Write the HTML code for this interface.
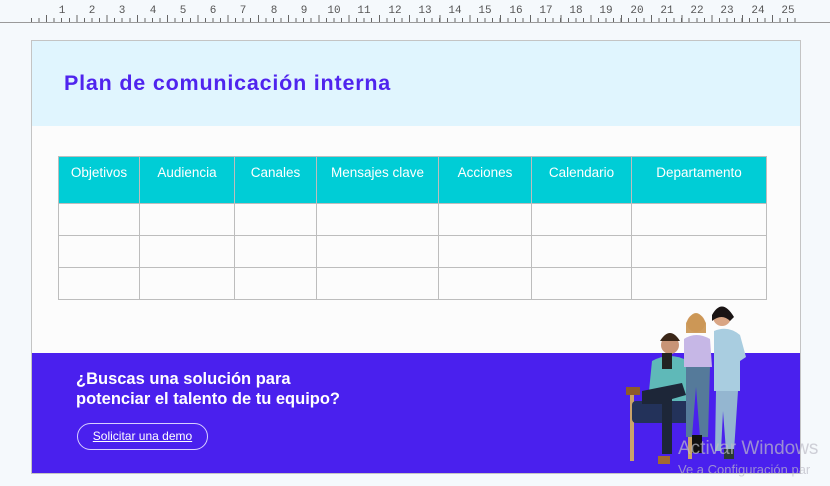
<!DOCTYPE html>
<html><head><meta charset="utf-8"><style>
*{margin:0;padding:0;box-sizing:border-box}
body{width:830px;height:486px;background:#f5f9fc;position:relative;overflow:hidden;font-family:"Liberation Sans",sans-serif}
.ruler{position:absolute;left:0;top:0;width:830px;height:23px}
.rl{position:absolute;left:0;top:22px;width:830px;height:1px;background:#9a9a9a}
.ticks{position:absolute;left:31px;top:18px;width:770px;height:4px;background:repeating-linear-gradient(90deg,#666 0 1px,transparent 1px 7.56px)}
.ticks2{position:absolute;left:31px;top:15px;width:770px;height:7px;background:repeating-linear-gradient(90deg,transparent 0 15.1px,#666 15.1px 16.1px,transparent 16.1px 30.25px)}
.num{position:absolute;top:5px;font-family:"Liberation Mono",monospace;font-size:11px;color:#555;transform:translateX(-50%)}
.card{position:absolute;left:31px;top:40px;width:770px;height:434px;background:#fcfcfc;border:1px solid #c4c4c4}
.head{position:absolute;left:0;top:0;width:768px;height:85px;background:#e0f5fe}
.title{position:absolute;left:32px;top:30px;font-size:21.5px;font-weight:bold;color:#4f24ee;letter-spacing:0.8px}
table{position:absolute;left:26px;top:115px;border-collapse:collapse;font-size:13.5px}
td,th{border:1px solid #bdbdbd}
th{background:#00cdd6;color:#fff;font-weight:normal;height:47px;vertical-align:top;padding-top:8px}
td{height:32px}
.band{position:absolute;left:0;top:312px;width:768px;height:120px;background:#4a20ee}
.q{position:absolute;left:44px;top:16px;color:#fff;font-size:16.5px;font-weight:bold;line-height:20px}
.btn{position:absolute;left:45px;top:70px;width:131px;height:27px;border:1px solid #d8d0ff;border-radius:14px;color:#fff;font-size:12px;text-decoration:underline;text-align:center;line-height:25px}
.wm1{position:absolute;left:678px;top:438px;color:rgba(190,190,200,.7);font-size:19px}
.wm2{position:absolute;left:678px;top:462px;color:rgba(190,190,200,.7);font-size:13px;white-space:nowrap}
</style></head><body>
<div class="ruler">
<div class="ticks"></div><div class="ticks2"></div><div class="rl"></div>
<span class="num" style="left:62px">1</span><span class="num" style="left:92px">2</span><span class="num" style="left:122px">3</span><span class="num" style="left:153px">4</span><span class="num" style="left:183px">5</span><span class="num" style="left:213px">6</span><span class="num" style="left:243px">7</span><span class="num" style="left:274px">8</span><span class="num" style="left:304px">9</span><span class="num" style="left:334px">10</span><span class="num" style="left:364px">11</span><span class="num" style="left:395px">12</span><span class="num" style="left:425px">13</span><span class="num" style="left:455px">14</span><span class="num" style="left:485px">15</span><span class="num" style="left:516px">16</span><span class="num" style="left:546px">17</span><span class="num" style="left:576px">18</span><span class="num" style="left:606px">19</span><span class="num" style="left:637px">20</span><span class="num" style="left:667px">21</span><span class="num" style="left:697px">22</span><span class="num" style="left:727px">23</span><span class="num" style="left:758px">24</span><span class="num" style="left:788px">25</span>
</div>
<div class="card">
<div class="head"><div class="title">Plan de comunicación interna</div></div>
<table>
<tr><th style="width:81px">Objetivos</th><th style="width:95px">Audiencia</th><th style="width:82px">Canales</th><th style="width:122px">Mensajes clave</th><th style="width:93px">Acciones</th><th style="width:100px">Calendario</th><th style="width:135px">Departamento</th></tr>
<tr><td></td><td></td><td></td><td></td><td></td><td></td><td></td></tr>
<tr><td></td><td></td><td></td><td></td><td></td><td></td><td></td></tr>
<tr><td></td><td></td><td></td><td></td><td></td><td></td><td></td></tr>
</table>
<div class="band">
<div class="q">¿Buscas una solución para<br>potenciar el talento de tu equipo?</div>
<div class="btn">Solicitar una demo</div>
</div>
<svg style="position:absolute;left:590px;top:260px" width="140" height="175" viewBox="0 0 140 175">
<rect x="8" y="90" width="4" height="70" fill="#c9a26a"/><rect x="66" y="88" width="4" height="70" fill="#c9a26a"/>
<rect x="10" y="100" width="58" height="22" rx="4" fill="#23325a"/>
<circle cx="48" cy="44" r="9" fill="#c89476"/><path d="M38 40 q10-16 20 0" fill="#3a2618"/>
<path d="M30 60 q18-10 36 0 l4 40 h-44z" fill="#5fb9b8"/>
<path d="M20 90 l40-8 l4 12 l-14 4 l0 55 h-10 l0-50 l-20 0z" fill="#1d2638"/>
<rect x="36" y="155" width="12" height="8" fill="#a36a30"/><rect x="4" y="86" width="14" height="8" fill="#8d5a2a"/>
<rect x="40" y="52" width="10" height="16" fill="#222"/>
<circle cx="74" cy="22" r="9" fill="#e5b28f"/><path d="M64 22 q10-20 20 0 l0 10 l-20 0z" fill="#c99450" opacity=".9"/>
<path d="M62 38 q12-8 26 0 l2 28 h-28z" fill="#c6b7e6"/>
<path d="M64 66 h24 l-2 70 h-8 l-4-50 l-4 50 h-6z" fill="#557a9a"/>
<rect x="70" y="134" width="10" height="18" fill="#111"/>
<circle cx="100" cy="16" r="9" fill="#d9a584"/><path d="M90 14 q10-18 22 2 l-4 4 q-8-8-18 0z" fill="#1a1414"/>
<path d="M92 30 q14-6 26 4 l6 22 l-6 4 l0 30 h-26z" fill="#a9cde0"/>
<path d="M94 90 h22 l-4 60 h-8 l-3-40 l-2 40 h-6z" fill="#94b6d0"/>
<rect x="102" y="148" width="10" height="10" fill="#2b3a33"/>
</svg>
</div>
<div class="wm1">Activar Windows</div>
<div class="wm2">Ve a Configuración par</div>
</body></html>
